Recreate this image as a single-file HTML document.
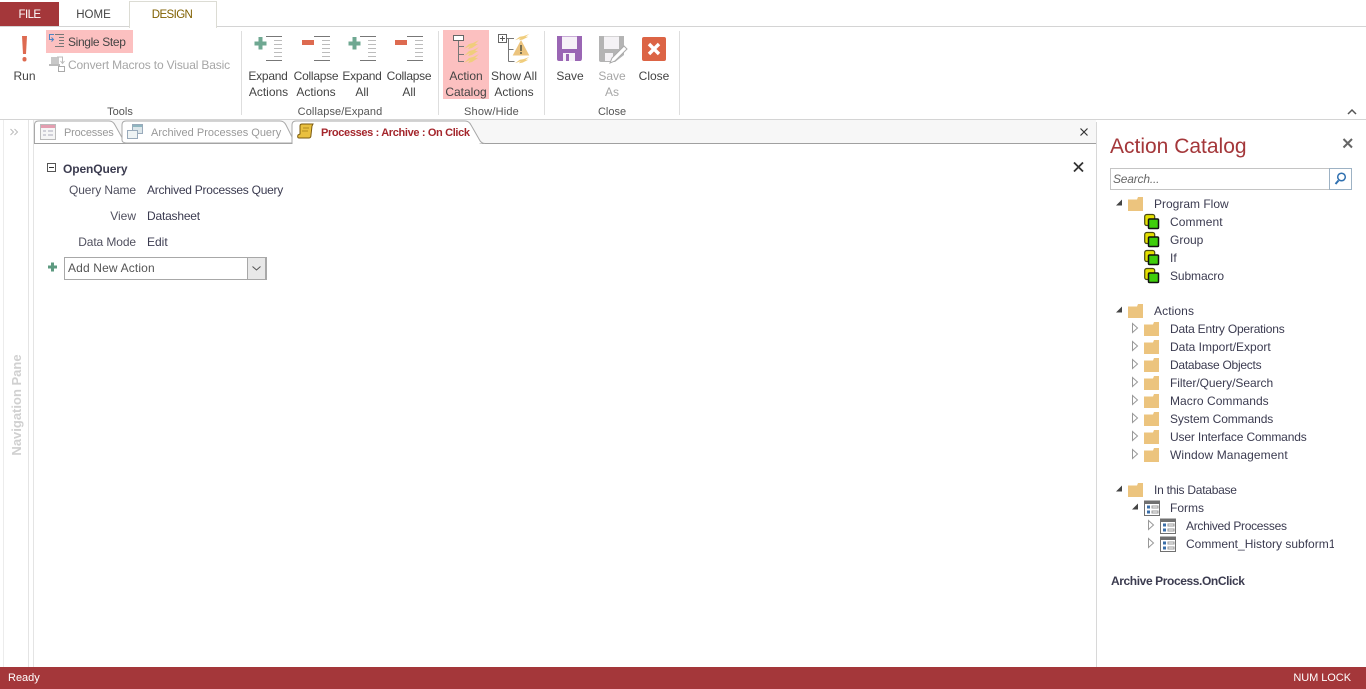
<!DOCTYPE html>
<html><head><meta charset="utf-8"><style>
html,body{margin:0;padding:0;background:#fff}
#p{position:relative;width:1366px;height:689px;overflow:hidden;background:#fff;font:12px "Liberation Sans",sans-serif;color:#444}
#p div.t{position:absolute;white-space:nowrap;line-height:16px;height:16px}
.c{transform:translateX(-50%)}
.r{transform:translateX(-100%)}
.b{position:absolute}
.g{color:#a6a6a6}
.d{color:#555}
.n{color:#3b3b50}
svg{position:absolute;left:0;top:0}
</style></head><body><div id="p">
<div class="b" style="left:0;top:26px;width:1366px;height:1px;background:#d4d4d4"></div>
<div class="b" style="left:0;top:2px;width:59px;height:24px;background:#a4373a"></div>
<div class="b" style="left:129px;top:1px;width:86px;height:26px;background:#fff;border:1px solid #dcdcd4;border-bottom:none;box-sizing:content-box"></div>
<div class="b" style="left:0;top:119px;width:1366px;height:1px;background:#d4d4d4"></div>
<div class="b" style="left:46px;top:30px;width:87px;height:23px;background:#fcc0c0"></div>
<div class="b" style="left:443px;top:30px;width:46px;height:69px;background:#fcc0c0"></div>
<div class="b" style="left:241px;top:31px;width:1px;height:84px;background:#dedede"></div>
<div class="b" style="left:438px;top:31px;width:1px;height:84px;background:#dedede"></div>
<div class="b" style="left:544px;top:31px;width:1px;height:84px;background:#dedede"></div>
<div class="b" style="left:679px;top:31px;width:1px;height:84px;background:#dedede"></div>

<div class="b" style="left:3px;top:120px;width:1px;height:547px;background:#ececec"></div>
<div class="b" style="left:28px;top:120px;width:1px;height:547px;background:#e4e4e4"></div>
<div class="b" style="left:33px;top:120px;width:1px;height:547px;background:#e4e4e4"></div>
<div class="b" style="left:1096px;top:122px;width:1px;height:545px;background:#d8d8d8"></div>
<div class="b" style="left:34px;top:120px;width:1062px;height:23px;background:#f7f7f7"></div>
<div class="b" style="left:34px;top:143px;width:1062px;height:1px;background:#a0a0a0"></div>
<div class="b" style="left:0;top:667px;width:1366px;height:22px;background:#a4373a"></div>

<svg width="1366" height="689" viewBox="0 0 1366 689" fill="none">
<defs>
<g id="fo"><path d="M0 3.500h9l1-2.500h5v14H0z" fill="#ecc47e"/></g>
<g id="gr"><rect x=".7" y=".5" width="10" height="11" rx="2" fill="#e4e000" stroke="#4a4a10" stroke-width="1.200"/><rect x="4.500" y="5" width="10" height="9.500" rx="1" fill="#3fce0c" stroke="#111" stroke-width="1.500"/></g>
<g id="fm"><rect x=".5" y="1" width="15" height="14.500" fill="#fff" stroke="#707070"/><rect x="0" y=".5" width="16" height="3.500" fill="#707070"/><rect x="3" y="5.500" width="3" height="3" fill="#3a6ea8"/><rect x="3" y="10.500" width="3" height="3" fill="#3a6ea8"/><path d="M8 6h6v2H8zM8 11h6v2H8z" stroke="#999"/></g>
<path id="to" d="M.5.500l5 4.500-5 4.500z" fill="#fff" stroke="#999"/>
<path id="tc" d="M6 0v6H0z" fill="#444" transform="translate(0 .5)"/>
<g id="ex"><path d="M0 .5h16M0 24.500h16" stroke="#777"/><path d="M8 4.500h8M8 8.500h8M8 12.500h8M8 16.500h8M8 20.500h8" stroke="#bcbcbc"/></g>
<path id="plus" d="M4.500 0h4v4.500h4v4h-4v4h-4v-4h-4v-4h4z" fill="#6fa892"/>
<path id="bolt" d="M0 9L5 4l4-1 6-3-4 4h3L8 8 4 9l2-3z" fill="#f0cd7c"/>
</defs>

<!-- Run -->
<path d="M22 36h5l-1 18h-3z" fill="#dd6a50"/><rect x="22.500" y="57" width="4" height="4.500" rx="2" fill="#dd6a50"/>
<!-- Single step -->
<path d="M54 34.500h-4.500v5h4M51.500 37.500l2 2-2 2" stroke="#4e84c4"/>
<path d="M55 34.500h9M59 37.500h5M59 40.500h5M59 43.500h5M55 46.500h9" stroke="#777"/>
<!-- Convert -->
<rect x="51" y="57" width="8" height="7" fill="#c8c8c8"/><path d="M49 64h11v2H49z" fill="#bbb"/><rect x="58.500" y="66.500" width="6" height="5" stroke="#aaa"/><path d="M57 57h5.500v6M60.500 61l2 2.500 2-2.500" stroke="#bbb"/>
<!-- Expand/collapse -->
<use href="#plus" x="254" y="37"/><use href="#ex" x="266" y="36"/>
<rect x="302" y="40" width="12" height="5" fill="#dd6a50"/><use href="#ex" x="314" y="36"/>
<use href="#plus" x="348" y="37"/><use href="#ex" x="360" y="36"/>
<rect x="395" y="40" width="12" height="5" fill="#dd6a50"/><use href="#ex" x="407" y="36"/>
<!-- Action catalog -->
<rect x="453.500" y="35.500" width="10" height="5" fill="#fff" stroke="#666"/>
<path d="M458.500 41v21M459 46.500h5M459 54.500h5M459 61.500h5" stroke="#777"/>
<use href="#bolt" x="464" y="40"/><use href="#bolt" x="464" y="47"/><use href="#bolt" x="464" y="54"/>
<!-- Show all -->
<rect x="498.500" y="34.500" width="8" height="8" fill="#fff" stroke="#666"/><path d="M500 38.500h5M502.500 36v5" stroke="#555"/>
<path d="M507 38.500h7M508.500 38.500v23M508.500 49.500h5M508.500 61.500h6" stroke="#777"/>
<g transform="translate(515 34) scale(.95 .7)"><use href="#bolt"/></g><g transform="translate(515 57) scale(.95 .7)"><use href="#bolt"/></g>
<path d="M521 41l7.500 14h-15z" fill="#ecc47e" stroke="#ecc47e"/><path d="M521 45v6M521 52v2" stroke="#554" stroke-width="1.500"/>
<!-- Save -->
<path d="M557 36h25v22q0 3-2 3h-21q-2 0-2-2z" fill="#9a66b4"/><rect x="562" y="36.500" width="15" height="12.500" fill="#f6f1f8"/><rect x="563" y="53" width="12" height="8" fill="#f6f1f8"/><rect x="566" y="54" width="3" height="7" fill="#9a66b4"/>
<path d="M599 36h25v19l-9 7h-14q-2 0-2-2z" fill="#b4b4b4"/><rect x="604" y="36.500" width="15" height="12.500" fill="#f4f2f5"/><rect x="605" y="53" width="8" height="8" fill="#f4f2f5"/>
<path d="M610 63l2-5 12-12 3 3-12 12z" fill="#fff" stroke="#aaa"/>
<!-- Close -->
<rect x="642" y="37" width="24" height="24" rx="2" fill="#dc6445"/><path d="M649 44l10 10M659 44l-10 10" stroke="#fff" stroke-width="3.400"/>
<!-- ribbon collapse -->
<path d="M1348 114l4-4 4 4" stroke="#555" stroke-width="1.500"/>
<!-- nav >> -->
<path d="M10.500 129l3 3-3 3M14.500 129l3 3-3 3" stroke="#bbb"/>
<!-- tabs -->
<path d="M34.500 143V125q0-4 4-4H109q4 0 6 4l10 18" fill="#fff" stroke="#a8a8a8"/>
<path d="M122 140V125q0-4 4-4H280q4 0 6 4l9 18H127q-5 0-5-3z" fill="#fff" stroke="#a8a8a8"/>
<path d="M292 143V125q0-4 4-4H465q4 0 6 4l8 14q2 4.500 6 4.500" fill="#fff" stroke="#a8a8a8"/>
<rect x="292.500" y="143" width="187" height="2" fill="#fff"/>
<!-- tab icons -->
<rect x="40.500" y="124.500" width="15" height="15" fill="#f6f6f6" stroke="#bbb"/><rect x="41" y="125" width="14" height="3" fill="#e49eb0"/><path d="M43 131h3M43 135h3M48 131h5M48 135h5" stroke="#aab"/>
<rect x="132.500" y="124.500" width="10" height="9" fill="#dce6ea" stroke="#9ab"/><rect x="127.500" y="130.500" width="10" height="8" fill="#eef3f4" stroke="#9ab"/><rect x="133" y="125" width="9" height="2" fill="#8fb6c0"/>
<path d="M300 126q0-2 2-2h11l-1 2-1 9q0 3-2 3h-10q-2 0-1-3l2-1z" fill="#e9c040" stroke="#7a5a10"/><path d="M303 128h6M302 131h6" stroke="#a07a18" stroke-width=".8"/>
<path d="M1080.500 128.500l7 7M1087.500 128.500l-7 7" stroke="#333" stroke-width="1.200"/>
<!-- macro block -->
<rect x="47.500" y="163.500" width="8" height="8" fill="#fff" stroke="#555"/><path d="M49 167.500h5" stroke="#333"/>
<path d="M1074 162.500l9 9M1083 162.500l-9 9" stroke="#333" stroke-width="1.800"/>
<path d="M51 262.500h3v3h3v3h-3v3h-3v-3h-3v-3h3z" fill="#5d9a80"/>
<rect x="64.500" y="257.500" width="202" height="22" fill="#fff" stroke="#a8a8a8"/><rect x="247" y="258" width="19" height="21" fill="#e8e8e8"/><path d="M247.500 258v21" stroke="#a8a8a8"/>
<rect x="265" y="258" width="1.500" height="21" fill="#a8a8a8"/>
<path d="M252.500 266.500l4 3.500 4-3.500" stroke="#555"/>
<!-- catalog -->
<path d="M1343.500 139l8.500 8.500M1352 139l-8.500 8.500" stroke="#666" stroke-width="2"/>
<rect x="1110.500" y="168.500" width="241" height="21" fill="#fff" stroke="#c4c4c4"/><rect x="1329.500" y="168.500" width="22" height="21" fill="#fff" stroke="#9db2c4"/>
<circle cx="1341.500" cy="177" r="3.800" stroke="#2f70b0" stroke-width="1.500"/><path d="M1338.500 180.500l-3 3.500" stroke="#2f70b0" stroke-width="2"/>

<use href="#tc" x="1116" y="199"/><use href="#fo" x="1128" y="196"/>
<use href="#gr" x="1144" y="214"/><use href="#gr" x="1144" y="232"/><use href="#gr" x="1144" y="250"/><use href="#gr" x="1144" y="268"/>
<use href="#tc" x="1116" y="306"/><use href="#fo" x="1128" y="303"/>
<use href="#to" x="1132" y="323"/><use href="#fo" x="1144" y="321"/>
<use href="#to" x="1132" y="341"/><use href="#fo" x="1144" y="339"/>
<use href="#to" x="1132" y="359"/><use href="#fo" x="1144" y="357"/>
<use href="#to" x="1132" y="377"/><use href="#fo" x="1144" y="375"/>
<use href="#to" x="1132" y="395"/><use href="#fo" x="1144" y="393"/>
<use href="#to" x="1132" y="413"/><use href="#fo" x="1144" y="411"/>
<use href="#to" x="1132" y="431"/><use href="#fo" x="1144" y="429"/>
<use href="#to" x="1132" y="449"/><use href="#fo" x="1144" y="447"/>
<use href="#tc" x="1116" y="485"/><use href="#fo" x="1128" y="482"/>
<use href="#tc" x="1132" y="503"/><use href="#fm" x="1144" y="500"/>
<use href="#to" x="1148" y="520"/><use href="#fm" x="1160" y="518"/>
<use href="#to" x="1148" y="538"/><use href="#fm" x="1160" y="536"/>
</svg>

<div class="t c" style="left:29.500px;top:7px;color:#fff;font-size:11.500px;letter-spacing:-.6px">FILE</div>
<div class="t c" style="left:93.500px;top:7px;color:#444;font-size:11.500px">HOME</div>
<div class="t c" style="left:172px;top:7px;color:#806000;font-size:11.500px;letter-spacing:-.6px">DESIGN</div>
<div class="t c" style="left:24.500px;top:68px">Run</div>
<div class="t" style="left:68px;top:34px;letter-spacing:-.35px">Single Step</div>
<div class="t g" style="left:68px;top:57px;letter-spacing:-.15px">Convert Macros to Visual Basic</div>
<div class="t c d" style="left:120px;top:104px;font-size:11px">Tools</div>
<div class="t c" style="left:268px;top:68px;letter-spacing:-.25px">Expand</div><div class="t c" style="left:268.500px;top:84px">Actions</div>
<div class="t c" style="left:316px;top:68px;letter-spacing:-.25px">Collapse</div><div class="t c" style="left:316px;top:84px">Actions</div>
<div class="t c" style="left:362px;top:68px;letter-spacing:-.25px">Expand</div><div class="t c" style="left:362px;top:84px">All</div>
<div class="t c" style="left:409px;top:68px;letter-spacing:-.25px">Collapse</div><div class="t c" style="left:409px;top:84px">All</div>
<div class="t c d" style="left:340px;top:104px;font-size:11px;letter-spacing:.1px">Collapse/Expand</div>
<div class="t c" style="left:466px;top:68px">Action</div><div class="t c" style="left:466px;top:84px">Catalog</div>
<div class="t c" style="left:514px;top:68px">Show All</div><div class="t c" style="left:514px;top:84px">Actions</div>
<div class="t c d" style="left:491.500px;top:104px;font-size:11px;letter-spacing:.2px">Show/Hide</div>
<div class="t c" style="left:570px;top:68px">Save</div>
<div class="t c g" style="left:612px;top:68px">Save</div><div class="t c g" style="left:612px;top:84px">As</div>
<div class="t c" style="left:654px;top:68px">Close</div>
<div class="t c d" style="left:612px;top:104px;font-size:11px">Close</div>

<div class="t" style="left:64px;top:125px;font-size:11px;color:#999;letter-spacing:-.2px">Processes</div>
<div class="t" style="left:151px;top:125px;font-size:11px;color:#999">Archived Processes Query</div>
<div class="t" style="left:321px;top:125px;font-size:11px;font-weight:bold;color:#a4262c;letter-spacing:-.35px">Processes : Archive : On Click</div>

<div class="t" style="left:63px;top:161px;font-weight:bold;color:#3c3c50;letter-spacing:-.1px">OpenQuery</div>
<div class="t r" style="left:136px;top:182px;color:#50505f;letter-spacing:-.1px">Query Name</div>
<div class="t n" style="left:147px;top:182px;letter-spacing:-.25px">Archived Processes Query</div>
<div class="t r" style="left:136px;top:208px;color:#50505f">View</div>
<div class="t n" style="left:147px;top:208px;letter-spacing:-.2px">Datasheet</div>
<div class="t r" style="left:136px;top:234px;color:#50505f;letter-spacing:-.1px">Data Mode</div>
<div class="t n" style="left:147px;top:234px">Edit</div>
<div class="t d" style="left:68px;top:260px;letter-spacing:.15px">Add New Action</div>

<div class="t" style="left:1110px;top:134px;height:26px;line-height:26px;font-size:21px;color:#a4373a">Action Catalog</div>
<div class="t" style="left:1113px;top:171px;font-style:italic;color:#666;letter-spacing:-.2px">Search...</div>
<div class="t n" style="left:1154px;top:196px">Program Flow</div>
<div class="t n" style="left:1170px;top:214px;letter-spacing:.1px">Comment</div>
<div class="t n" style="left:1170px;top:232px">Group</div>
<div class="t n" style="left:1170px;top:250px">If</div>
<div class="t n" style="left:1170px;top:268px;letter-spacing:-.1px">Submacro</div>
<div class="t n" style="left:1154px;top:303px;letter-spacing:.1px">Actions</div>
<div class="t n" style="left:1170px;top:321px;letter-spacing:-.2px">Data Entry Operations</div>
<div class="t n" style="left:1170px;top:339px">Data Import/Export</div>
<div class="t n" style="left:1170px;top:357px;letter-spacing:-.25px">Database Objects</div>
<div class="t n" style="left:1170px;top:375px;letter-spacing:-.05px">Filter/Query/Search</div>
<div class="t n" style="left:1170px;top:393px;letter-spacing:.05px">Macro Commands</div>
<div class="t n" style="left:1170px;top:411px;letter-spacing:-.1px">System Commands</div>
<div class="t n" style="left:1170px;top:429px;letter-spacing:-.15px">User Interface Commands</div>
<div class="t n" style="left:1170px;top:447px;letter-spacing:.1px">Window Management</div>
<div class="t n" style="left:1154px;top:482px;letter-spacing:-.25px">In this Database</div>
<div class="t n" style="left:1170px;top:500px">Forms</div>
<div class="t n" style="left:1186px;top:518px;letter-spacing:-.3px">Archived Processes</div>
<div class="t n" style="left:1186px;top:536px;width:148px;overflow:hidden">Comment_History subform1</div>
<div class="t" style="left:1111px;top:573px;font-weight:bold;color:#3c3c50;letter-spacing:-.4px">Archive Process.OnClick</div>

<div class="t" style="left:17px;top:405px;font-size:13px;font-weight:bold;color:#d0d0d0;transform:translate(-50%,-50%) rotate(-90deg)">Navigation Pane</div>
<div class="t" style="left:8px;top:670px;font-size:11px;color:#fff">Ready</div>
<div class="t r" style="left:1351px;top:670px;font-size:11px;color:#fff;letter-spacing:-.05px">NUM LOCK</div>
</div></body></html>
